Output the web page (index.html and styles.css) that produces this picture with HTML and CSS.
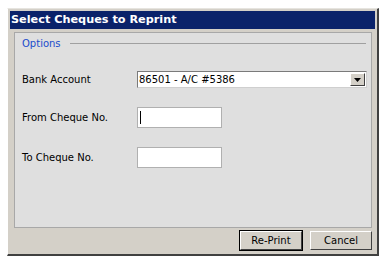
FILE: index.html
```html
<!DOCTYPE html>
<html>
<head>
<meta charset="utf-8">
<link rel="stylesheet" href="styles.css">
</head>
<body>
<div class="window">
  <div class="titlebar">Select Cheques to Reprint</div>
  <div class="panel">
    <div class="legend"><span class="legend-text">Options</span><span class="legend-line"></span></div>
    <div class="row row-first">
      <span class="label">Bank Account</span>
      <div class="combo">
        <span class="combo-text">86501 - A/C #5386</span>
        <span class="combo-btn"><svg width="7" height="4" viewBox="0 0 7 4"><path d="M0 0h7L3.5 4z" fill="#000"/></svg></span>
      </div>
    </div>
    <div class="row">
      <span class="label">From Cheque No.</span>
      <div class="textbox"><span class="caret"></span></div>
    </div>
    <div class="row">
      <span class="label">To Cheque No.</span>
      <div class="textbox"></div>
    </div>
  </div>
  <div class="footer">
    <button class="btn btn-default">Re-Print</button>
    <button class="btn">Cancel</button>
  </div>
</div>
</body>
</html>
```
FILE: styles.css
```css
html, body {
  margin: 0;
  padding: 0;
  background: #ffffff;
}
body {
  font-family: "DejaVu Sans", sans-serif;
  font-size: 10px;
  color: #000;
}
.window {
  margin: 8px 0 0 7px;
  width: 372px;
  height: 248px;
  box-sizing: border-box;
  background: #d4d0c8;
  border-left: 1px solid #ffffff;
  border-top: 1px solid #e6e4df;
  border-right: 2px solid #404040;
  border-bottom: 2px solid #404040;
  padding: 2px 2px 0 2px;
  display: flex;
  flex-direction: column;
}
.titlebar {
  height: 18px;
  background: #0a226a;
  color: #fff;
  font-weight: bold;
  font-size: 11.25px;
  line-height: 18px;
  padding-left: 1px;
}
.panel {
  margin: 3px 3px 0 4px;
  height: 196px;
  box-sizing: border-box;
  background: #dfdfdf;
  border: 1px solid #a8a8a8;
  padding: 0 0 0 7px;
}
.legend {
  display: flex;
  align-items: center;
  height: 20px;
  margin-top: 0;
}
.legend-text {
  color: #1a4ccc;
  font-size: 10px;
}
.legend-line {
  flex: 1;
  height: 1px;
  background: #a0a0a0;
  margin: 1px 5px 0 9px;
}
.row {
  display: flex;
  align-items: center;
  height: 21px;
  margin-top: 19px;
}
.row-first {
  margin-top: 18px;
  height: 17px;
}
.label {
  width: 115px;
}
.combo {
  width: 230px;
  height: 17px;
  box-sizing: border-box;
  background: #fff;
  border: 1px solid #7a7a7a;
  border-right-color: #cfcfcf;
  border-bottom-color: #cfcfcf;
  display: flex;
  align-items: center;
}
.combo-text {
  flex: 1;
  padding-left: 1px;
}
.combo-btn {
  width: 15px;
  height: 13px;
  margin-right: 1px;
  box-sizing: border-box;
  background: #d4d0c8;
  border: 1px solid #fff;
  border-right-color: #404040;
  border-bottom-color: #404040;
  display: flex;
  align-items: center;
  justify-content: center;
}
.textbox {
  width: 85px;
  height: 21px;
  box-sizing: border-box;
  background: #fff;
  border: 1px solid #b0b0b0;
  display: flex;
  align-items: center;
  padding-left: 2px;
}
.caret {
  width: 1px;
  height: 13px;
  background: #000;
}
.footer {
  display: flex;
  justify-content: flex-end;
  gap: 8px;
  padding: 3px 3px 0 0;
}
.btn {
  width: 62px;
  height: 19px;
  box-sizing: border-box;
  background: #d4d0c8;
  border: 1px solid #fff;
  border-right-color: #404040;
  border-bottom-color: #404040;
  font-family: "DejaVu Sans", sans-serif;
  font-size: 10px;
  color: #000;
  padding: 0;
  margin: 0;
}
.btn-default {
  outline: 1px solid #000;
}
```
